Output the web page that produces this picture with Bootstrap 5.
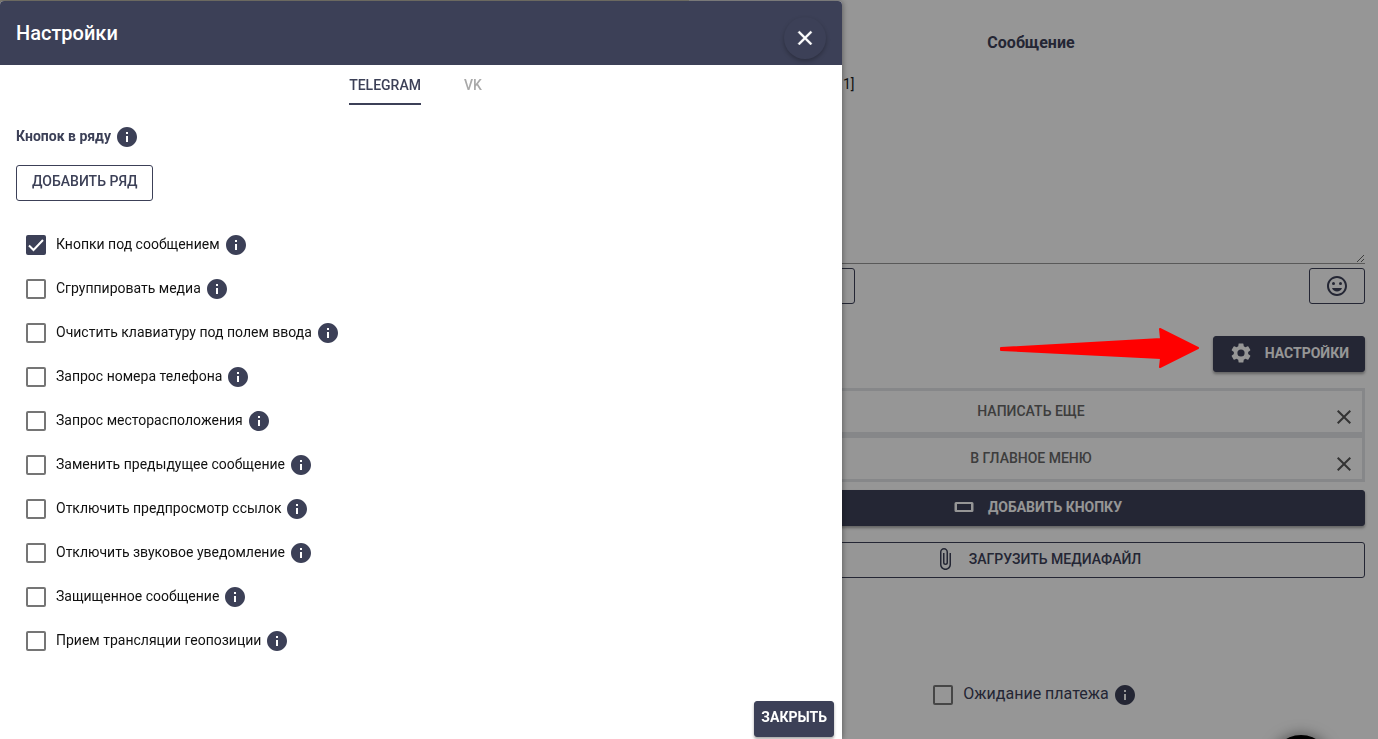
<!DOCTYPE html>
<html lang="ru">
<head>
<meta charset="utf-8">
<meta name="viewport" content="width=device-width, initial-scale=1">
<title>Настройки</title>
<link href="https://cdn.jsdelivr.net/npm/bootstrap@5.3.0/dist/css/bootstrap.min.css" rel="stylesheet">
<style>
:root { --ink: #3c4057; --radius: 3px; }
body { font-family: Roboto, "Liberation Sans", sans-serif; font-size: 14px; line-height: 20px; background: #fafafa; color: var(--ink); overflow: hidden; }
svg { display: block; flex: none; fill: currentColor; }
.canvas-side { background: #ded9c8; }
.editor { padding: 33px 13px 0 8px; }
.editor-title { font-size: 16px; line-height: 20px; font-weight: 700; }
.message-box { height: 191px; padding: 1px 0 0 146px; border: 0; border-bottom: 1px solid #949494; border-radius: 0; background: transparent; font-size: 14px; line-height: 20px; color: #222; resize: vertical; }
.action { height: 36px; padding: 0 15px 2px; border: 1px solid var(--ink); border-radius: var(--radius); color: var(--ink); background: transparent; font-size: 14px; line-height: 20px; font-weight: 500; display: inline-flex; align-items: center; justify-content: center; }
.action-solid { background: var(--ink); color: #fff; font-weight: 700; box-shadow: 0 2px 3px rgba(0,0,0,.35); }
.action-wide { padding-left: 27px; }
.action-text { padding-bottom: 4px; }
.action-close { padding-left: 6px; padding-right: 6px; }
.editor .action-solid { color: #fafafa; }
.var-button { width: 158px; }
.emoji-button { width: 56px; padding: 0; }
.key-item { height: 47px; padding-bottom: 2px; border: 3px solid #e0e2e5; color: #666; font-weight: 500; }
.key-remove { right: 6px; bottom: 3px; color: #555; }
.scrim { background: rgba(0,0,0,.4); }
.chat-bubble { right: 47px; bottom: -56px; width: 60px; height: 60px; border-radius: 50%; border: 0; background: #000; box-shadow: 0 0 14px rgba(0,0,0,.5); }
.pointer { top: 326px; right: 178px; fill: #f00; stroke: #f00; stroke-width: 2px; stroke-linejoin: round; }
.settings { top: 1px; bottom: 0; left: 0; width: 61.1vw; background: #fff; border-radius: 4px 4px 0 0; box-shadow: 0 0 6px rgba(0,0,0,.45); }
.settings-head { height: 64px; padding: 0 16px; background: var(--ink); color: #fff; border-radius: 4px 4px 0 0; }
.settings-title { font-size: 20px; line-height: 24px; font-weight: 500; }
.settings-foot { padding: 0 8px 2px 0; }
.round-close { width: 42px; height: 42px; border: 0; border-radius: 50%; background: transparent; color: #fff; box-shadow: 0 2px 4px rgba(0,0,0,.28); margin-top: 10px; }
.tabs { gap: 43px; padding: 10px 11px 0 0; }
.tab-button { padding: 0 0 8px; border: 0; border-bottom: 2px solid transparent; background: none; color: #a9a9a9; font-weight: 500; }
.tab-button.active { border-color: var(--ink); color: var(--ink); }
.row-label { font-weight: 700; padding-bottom: 2px; }
.settings-body { padding: 20px 16px 0; }
.options { padding: 22px 10px 0; }
.option { height: 44px; }
.tick { appearance: none; width: 20px; height: 20px; margin: 0; border: 2px solid #757575; border-radius: 2px; flex: none; background: none; }
.tick:checked { border-color: var(--ink); background: var(--ink) url("data:image/svg+xml,%3Csvg xmlns='http://www.w3.org/2000/svg' viewBox='0 0 16 16'%3E%3Cpath d='M1 8.5 5.5 13 15 3' fill='none' stroke='%23fff' stroke-width='2'/%3E%3C/svg%3E") center/16px no-repeat; }
.option label { padding: 0 4px 2px 10px; color: #111; }
.payment { margin-top: 105px; }
.payment label { font-size: 16px; padding: 0 4px 2px 10px; }
</style>
</head>
<body>
<svg width="0" height="0" class="position-absolute" aria-hidden="true">
  <symbol id="info" viewBox="0 0 24 24"><path d="M12 2C6.48 2 2 6.48 2 12s4.480 10 10 10 10-4.480 10-10S17.520 2 12 2zm1 15h-2v-6h2v6zm0-8h-2V7h2v2z"/></symbol>
  <symbol id="cross" viewBox="0 0 24 24"><path d="M19 6.410 17.590 5 12 10.590 6.410 5 5 6.410 10.590 12 5 17.590 6.410 19 12 13.410 17.590 19 19 17.590 13.410 12z"/></symbol>
</svg>

<main class="container-fluid">
  <div class="row vh-100">
    <div class="col-6 canvas-side"></div>
    <section class="col-6 editor">
      <h2 class="editor-title text-center mb-0"><label for="message">Сообщение</label></h2>
      <div class="pt-3 mt-1"><textarea id="message" class="message-box w-100 d-block">1]</textarea></div>
      <div class="d-flex justify-content-between pt-1">
        <button type="button" class="action var-button" aria-label="Переменные"></button>
        <button type="button" class="action emoji-button" aria-label="Смайлы">
          <svg width="24" height="24" viewBox="0 0 24 24"><path d="M11.990 2C6.470 2 2 6.480 2 12s4.470 10 9.990 10C17.520 22 22 17.520 22 12S17.520 2 11.990 2zM12 20c-4.420 0-8-3.580-8-8s3.580-8 8-8 8 3.580 8 8-3.580 8-8 8z"/><circle cx="8.500" cy="9.500" r="1.500"/><circle cx="15.500" cy="9.500" r="1.500"/><path d="M7 14h10c-.7 2.200-2.700 3.600-5 3.600S7.700 16.200 7 14z"/></svg>
        </button>
      </div>
      <div class="d-flex justify-content-end mt-3 pt-3 pb-3">
        <button type="button" class="action action-solid gap-2">
          <svg width="24" height="24" viewBox="0 0 24 24"><path d="M19.140 12.940c.04-.3.060-.61.060-.94s-.02-.64-.07-.94l2.030-1.580a.49.49 0 0 0 .12-.61l-1.920-3.320a.49.49 0 0 0-.59-.22l-2.390.96c-.5-.38-1.030-.7-1.620-.94l-.36-2.540A.48.48 0 0 0 13.920 2.400h-3.840c-.24 0-.43.170-.47.410l-.36 2.540c-.59.240-1.130.570-1.620.94l-2.390-.96a.49.49 0 0 0-.59.220L2.740 8.870c-.12.210-.08.470.120.610l2.030 1.580c-.05.3-.09.630-.09.940s.02.640.070.94l-2.030 1.580a.49.49 0 0 0-.12.610l1.920 3.320c.12.220.370.290.59.220l2.390-.96c.5.380 1.030.7 1.620.94l.36 2.540c.05.240.240.410.480.410h3.840c.24 0 .44-.17.470-.41l.36-2.540c.59-.24 1.130-.56 1.620-.94l2.390.96c.22.080.47 0 .59-.22l1.920-3.320a.49.49 0 0 0-.12-.61zM12 15.600a3.600 3.600 0 1 1 0-7.200 3.600 3.600 0 0 1 0 7.200z"/></svg>
          <span class="ps-1">НАСТРОЙКИ</span>
        </button>
      </div>
      <div class="key-item position-relative d-flex align-items-center justify-content-center">НАПИСАТЬ ЕЩЕ
        <button type="button" class="key-remove position-absolute border-0 bg-transparent p-0" aria-label="Удалить"><svg width="24" height="24"><use href="#cross"/></svg></button>
      </div>
      <div class="key-item position-relative d-flex align-items-center justify-content-center">В ГЛАВНОЕ МЕНЮ
        <button type="button" class="key-remove position-absolute border-0 bg-transparent p-0" aria-label="Удалить"><svg width="24" height="24"><use href="#cross"/></svg></button>
      </div>
      <button type="button" class="action action-solid action-wide w-100 mt-2 gap-2">
        <svg width="24" height="24" viewBox="0 0 24 24"><path d="M20 7H4a1.500 1.500 0 0 0-1.500 1.500v7A1.500 1.500 0 0 0 4 17h16a1.500 1.500 0 0 0 1.500-1.500v-7A1.500 1.500 0 0 0 20 7zm-1 8H5V9h14z"/></svg>
        <span class="ps-1">ДОБАВИТЬ КНОПКУ</span>
      </button>
      <button type="button" class="action action-wide w-100 mt-3 gap-2">
        <svg width="24" height="24" viewBox="0 0 24 24"><path d="M16.500 6v11.500c0 2.210-1.790 4-4 4s-4-1.790-4-4V5a2.500 2.500 0 0 1 5 0v10.500c0 .55-.45 1-1 1s-1-.45-1-1V6H10v9.500a2.500 2.500 0 0 0 5 0V5c0-2.210-1.790-4-4-4S7 2.790 7 5v12.500c0 3.040 2.460 5.500 5.500 5.500s5.500-2.460 5.500-5.500V6z"/></svg>
        <span class="ps-1">ЗАГРУЗИТЬ МЕДИАФАЙЛ</span>
      </button>
      <div class="payment d-flex align-items-center justify-content-center ps-2">
        <input class="tick" type="checkbox" id="pay"><label for="pay">Ожидание платежа</label><svg width="24" height="24"><use href="#info"/></svg>
      </div>
    </section>
  </div>
</main>
<button type="button" class="chat-bubble position-fixed" aria-label="Чат"></button>
<div class="scrim position-fixed top-0 start-0 w-100 h-100"></div>
<svg class="pointer position-fixed" width="202" height="44" viewBox="0 0 202 44" aria-hidden="true"><path d="M3 22 163 13 162 3 200 22 162 41 163 32 3 24z"/></svg>

<div class="settings position-fixed d-flex flex-column" role="dialog" aria-labelledby="settings-title">
  <header class="settings-head d-flex align-items-center justify-content-between">
    <h1 class="settings-title m-0" id="settings-title">Настройки</h1>
    <button type="button" class="round-close d-flex align-items-center justify-content-center p-0" aria-label="Закрыть окно"><svg width="24" height="24" stroke="currentColor" stroke-width=".4"><use href="#cross"/></svg></button>
  </header>
  <div class="tabs d-flex justify-content-center" role="tablist">
    <button type="button" class="tab-button active" role="tab" aria-selected="true">TELEGRAM</button>
    <button type="button" class="tab-button" role="tab" aria-selected="false">VK</button>
  </div>
  <div class="settings-body">
    <div class="d-flex align-items-center gap-1"><span class="row-label">Кнопок в ряду</span><svg width="24" height="24"><use href="#info"/></svg></div>
    <button type="button" class="action action-text mt-3">ДОБАВИТЬ РЯД</button>
    <div class="options">
      <div class="option d-flex align-items-center"><input class="tick" type="checkbox" id="o1" checked><label for="o1">Кнопки под сообщением</label><svg width="24" height="24"><use href="#info"/></svg></div>
      <div class="option d-flex align-items-center"><input class="tick" type="checkbox" id="o2"><label for="o2">Сгруппировать медиа</label><svg width="24" height="24"><use href="#info"/></svg></div>
      <div class="option d-flex align-items-center"><input class="tick" type="checkbox" id="o3"><label for="o3">Очистить клавиатуру под полем ввода</label><svg width="24" height="24"><use href="#info"/></svg></div>
      <div class="option d-flex align-items-center"><input class="tick" type="checkbox" id="o4"><label for="o4">Запрос номера телефона</label><svg width="24" height="24"><use href="#info"/></svg></div>
      <div class="option d-flex align-items-center"><input class="tick" type="checkbox" id="o5"><label for="o5">Запрос месторасположения</label><svg width="24" height="24"><use href="#info"/></svg></div>
      <div class="option d-flex align-items-center"><input class="tick" type="checkbox" id="o6"><label for="o6">Заменить предыдущее сообщение</label><svg width="24" height="24"><use href="#info"/></svg></div>
      <div class="option d-flex align-items-center"><input class="tick" type="checkbox" id="o7"><label for="o7">Отключить предпросмотр ссылок</label><svg width="24" height="24"><use href="#info"/></svg></div>
      <div class="option d-flex align-items-center"><input class="tick" type="checkbox" id="o8"><label for="o8">Отключить звуковое уведомление</label><svg width="24" height="24"><use href="#info"/></svg></div>
      <div class="option d-flex align-items-center"><input class="tick" type="checkbox" id="o9"><label for="o9">Защищенное сообщение</label><svg width="24" height="24"><use href="#info"/></svg></div>
      <div class="option d-flex align-items-center"><input class="tick" type="checkbox" id="o10"><label for="o10">Прием трансляции геопозиции</label><svg width="24" height="24"><use href="#info"/></svg></div>
    </div>
  </div>
  <footer class="settings-foot mt-auto d-flex justify-content-end">
    <button type="button" class="action action-solid action-text action-close">ЗАКРЫТЬ</button>
  </footer>
</div>
<script src="https://cdn.jsdelivr.net/npm/bootstrap@5.3.0/dist/js/bootstrap.bundle.min.js"></script>
</body>
</html>
